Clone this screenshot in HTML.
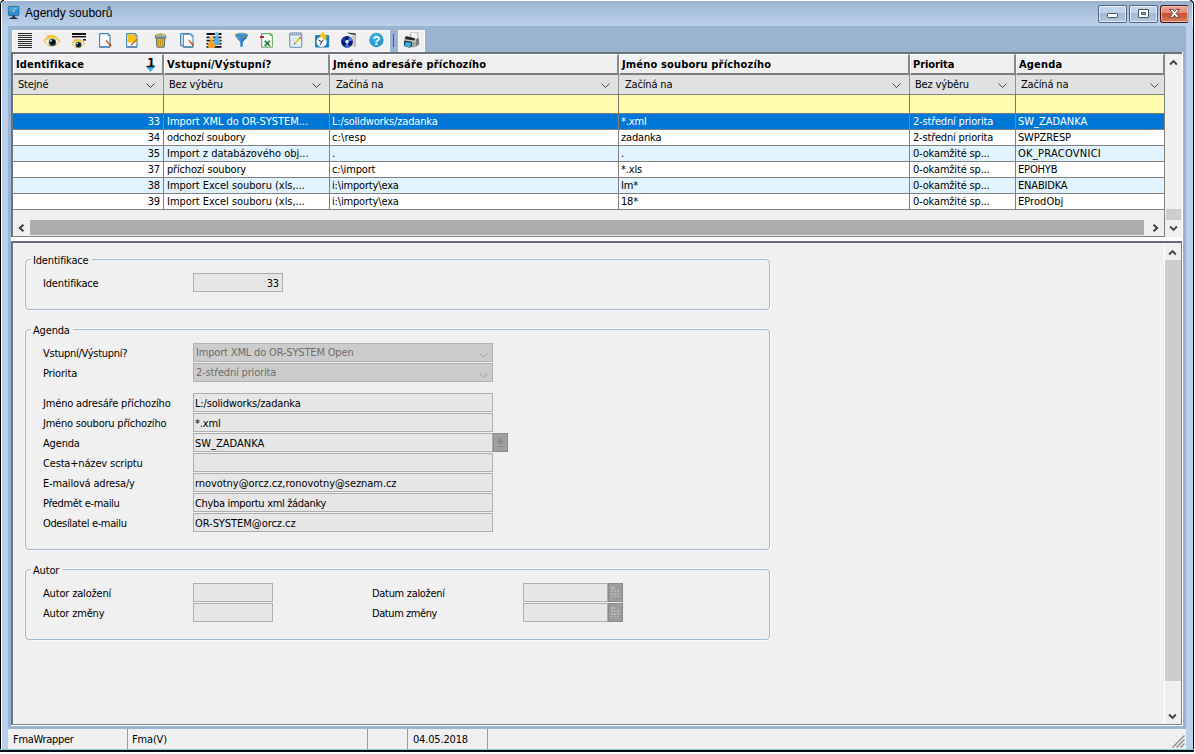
<!DOCTYPE html>
<html lang="cs">
<head>
<meta charset="utf-8">
<title>Agendy souborů</title>
<style>
*{box-sizing:border-box;margin:0;padding:0}
html,body{width:1195px;height:754px;overflow:hidden;background:#fff}
body{position:relative;font-family:"DejaVu Sans Condensed","Liberation Sans",sans-serif;font-size:11px;color:#000;letter-spacing:-0.17px;line-height:13px}
.a{position:absolute}
.t{position:absolute;white-space:nowrap;height:13px;line-height:13px}
.b{font-weight:700;letter-spacing:0.17px}
.w{color:#fff}
svg{position:absolute;overflow:visible}
</style>
</head>
<body>
<div class="a" style="left:0px;top:0px;width:1194px;height:752px;background:#b9d1ea;"></div>
<div class="a" style="left:1px;top:0px;width:1192px;height:26px;background:linear-gradient(#9cb1cc 0,#9cb1cc 2px,#99b4d2 2px,#a5bedb 9px,#b1c9e5 18px,#bad2eb 26px);"></div>
<div class="a" style="left:0px;top:0px;width:1px;height:752px;background:#000;"></div>
<div class="a" style="left:1193px;top:0px;width:1px;height:752px;background:#000;"></div>
<div class="a" style="left:1px;top:0px;width:1px;height:750px;background:#fff;"></div>
<div class="a" style="left:1192px;top:0px;width:1px;height:27px;background:#e4eef8;"></div>
<div class="a" style="left:1px;top:0px;width:1192px;height:1px;background:#fff;"></div>
<div class="a" style="left:0px;top:749px;width:1194px;height:1px;background:#86c6d6;"></div>
<div class="a" style="left:0px;top:750px;width:1194px;height:2px;background:#0b1016;"></div>
<div class="a" style="left:8px;top:26px;width:1178px;height:723px;background:#99b4d1;"></div>
<div class="t" id="ttl" style="left:25px;top:6px;font-family:'Liberation Sans',sans-serif;font-size:12px;letter-spacing:0;height:15px;line-height:15px">Agendy souborů</div>
<div class="a" style="left:1098px;top:5px;width:29px;height:18px;background:linear-gradient(#c7d8ec 0,#bdd0e7 44%,#a4bbd7 46%,#a9c0db 75%,#b4cae4 100%);border:1px solid #55677f;border-radius:2px;box-shadow:inset 0 0 0 1px rgba(240,247,255,.7)"></div>
<div class="a" style="left:1129px;top:5px;width:29px;height:18px;background:linear-gradient(#c7d8ec 0,#bdd0e7 44%,#a4bbd7 46%,#a9c0db 75%,#b4cae4 100%);border:1px solid #55677f;border-radius:2px;box-shadow:inset 0 0 0 1px rgba(240,247,255,.7)"></div>
<div class="a" style="left:1160px;top:5px;width:29px;height:18px;background:linear-gradient(#eaa594 0,#e08a74 44%,#c94f2e 46%,#cf5f3f 70%,#dc866c 100%);border:1px solid #3c1a1c;border-right-color:#b9a0a8;border-radius:3px;box-shadow:inset 0 0 0 1px rgba(255,225,215,.55)"></div>
<svg style="left:1106px;top:12px" width="13" height="7" viewBox="0 0 13 7"><rect x="1.5" y="1.5" width="10" height="4" rx=".8" fill="#fff" stroke="#46505e" stroke-width="1"/></svg>
<svg style="left:1137px;top:8px" width="13" height="11" viewBox="0 0 13 11"><path fill-rule="evenodd" d="M2 1.5 H11 Q11.5 1.5 11.5 2 V9 Q11.5 9.5 11 9.5 H2 Q1.5 9.5 1.5 9 V2 Q1.5 1.5 2 1.5z M4.5 4.5 V6.5 H8.5 V4.5z" fill="#fff" stroke="#46505e" stroke-width="1"/></svg>
<svg style="left:1168px;top:8px" width="13" height="11" viewBox="0 0 13 11"><path d="M1.6 1.4 H4.6 L6.5 3.6 L8.4 1.4 H11.4 L8.2 5.4 L11.6 9.4 H8.4 L6.5 7.2 L4.6 9.4 H1.4 L4.8 5.4z" fill="#fff" stroke="#5a3a3a" stroke-width=".9" stroke-linejoin="round"/></svg>
<svg style="left:0;top:0" width="5" height="5" viewBox="0 0 5 5"><path d="M0 0H5L0 4z" fill="#fff"/><path d="M0.5 3.5 L1.5 1.5 L3.8 0" stroke="#000" stroke-width="1.1" fill="none"/></svg>
<svg style="left:1189px;top:0" width="6" height="5" viewBox="0 0 6 5"><path d="M0 0H6V4z" fill="#fff"/><path d="M1 0 L3.4 1.4 L4.5 3.6" stroke="#000" stroke-width="1.1" fill="none"/></svg>
<div class="a" style="left:12px;top:30px;width:378px;height:22px;background:#f0f0f0;border:1px solid #f9f9f9"></div>
<div class="a" style="left:393px;top:34px;width:1px;height:13px;background:#4b5a6b;"></div>
<div class="a" style="left:398px;top:30px;width:27px;height:22px;background:#f0f0f0;border:1px solid #f9f9f9"></div>
<div class="a" style="left:11px;top:52px;width:1172px;height:185px;background:#f0f0f0;"></div>
<div class="a" style="left:11px;top:52px;width:1171px;height:2px;background:#6b737c;"></div>
<div class="a" style="left:11px;top:52px;width:2px;height:185px;background:#6b737c;"></div>
<div class="a" style="left:1182px;top:52px;width:1px;height:189px;background:#fff;"></div>
<div class="a" style="left:13px;top:54px;width:151px;height:21px;background:#f0f0f0;border-top:1px solid #fff;border-left:1px solid #fff;border-right:2px solid #8a8a8a;border-bottom:2px solid #7d7d7d"></div>
<div class="a" style="left:13px;top:75px;width:151px;height:20px;background:#e1e1e1;border-right:1px solid #909090;border-bottom:1px solid #828079"></div>
<div class="a" style="left:13px;top:95px;width:151px;height:19px;background:#fffcb0;border-right:1px solid #77756a;border-bottom:1px solid #7c7c7c"></div>
<div class="a" style="left:164px;top:54px;width:166px;height:21px;background:#f0f0f0;border-top:1px solid #fff;border-left:1px solid #fff;border-right:2px solid #8a8a8a;border-bottom:2px solid #7d7d7d"></div>
<div class="a" style="left:164px;top:75px;width:166px;height:20px;background:#e1e1e1;border-right:1px solid #909090;border-bottom:1px solid #828079"></div>
<div class="a" style="left:164px;top:95px;width:166px;height:19px;background:#fffcb0;border-right:1px solid #77756a;border-bottom:1px solid #7c7c7c"></div>
<div class="a" style="left:330px;top:54px;width:289px;height:21px;background:#f0f0f0;border-top:1px solid #fff;border-left:1px solid #fff;border-right:2px solid #8a8a8a;border-bottom:2px solid #7d7d7d"></div>
<div class="a" style="left:330px;top:75px;width:289px;height:20px;background:#e1e1e1;border-right:1px solid #909090;border-bottom:1px solid #828079"></div>
<div class="a" style="left:330px;top:95px;width:289px;height:19px;background:#fffcb0;border-right:1px solid #77756a;border-bottom:1px solid #7c7c7c"></div>
<div class="a" style="left:619px;top:54px;width:291px;height:21px;background:#f0f0f0;border-top:1px solid #fff;border-left:1px solid #fff;border-right:2px solid #8a8a8a;border-bottom:2px solid #7d7d7d"></div>
<div class="a" style="left:619px;top:75px;width:291px;height:20px;background:#e1e1e1;border-right:1px solid #909090;border-bottom:1px solid #828079"></div>
<div class="a" style="left:619px;top:95px;width:291px;height:19px;background:#fffcb0;border-right:1px solid #77756a;border-bottom:1px solid #7c7c7c"></div>
<div class="a" style="left:910px;top:54px;width:106px;height:21px;background:#f0f0f0;border-top:1px solid #fff;border-left:1px solid #fff;border-right:2px solid #8a8a8a;border-bottom:2px solid #7d7d7d"></div>
<div class="a" style="left:910px;top:75px;width:106px;height:20px;background:#e1e1e1;border-right:1px solid #909090;border-bottom:1px solid #828079"></div>
<div class="a" style="left:910px;top:95px;width:106px;height:19px;background:#fffcb0;border-right:1px solid #77756a;border-bottom:1px solid #7c7c7c"></div>
<div class="a" style="left:1016px;top:54px;width:149px;height:21px;background:#f0f0f0;border-top:1px solid #fff;border-left:1px solid #fff;border-right:2px solid #8a8a8a;border-bottom:2px solid #7d7d7d"></div>
<div class="a" style="left:1016px;top:75px;width:149px;height:20px;background:#e1e1e1;border-right:1px solid #909090;border-bottom:1px solid #828079"></div>
<div class="a" style="left:1016px;top:95px;width:149px;height:19px;background:#fffcb0;border-right:1px solid #77756a;border-bottom:1px solid #7c7c7c"></div>
<div class="t b" style="left:16px;top:58px;">Identifikace</div>
<div class="t b" style="left:167px;top:58px;">Vstupní/Výstupní?</div>
<div class="t b" style="left:333px;top:58px;">Jméno adresáře příchozího</div>
<div class="t b" style="left:622px;top:58px;">Jméno souboru příchozího</div>
<div class="t b" style="left:913px;top:58px;letter-spacing:-0.08px;">Priorita</div>
<div class="t b" style="left:1019px;top:58px;">Agenda</div>
<div class="t" style="left:18px;top:78px;">Stejné</div>
<svg style="left:146px;top:83px" width="10" height="6" viewBox="0 0 10 6"><path d="M0.5 0.5 L4.5 4.5 L8.5 0.5" fill="none" stroke="#404040" stroke-width="1"/></svg>
<div class="t" style="left:169px;top:78px;">Bez výběru</div>
<svg style="left:312px;top:83px" width="10" height="6" viewBox="0 0 10 6"><path d="M0.5 0.5 L4.5 4.5 L8.5 0.5" fill="none" stroke="#404040" stroke-width="1"/></svg>
<div class="t" style="left:336px;top:78px;">Začíná na</div>
<svg style="left:601px;top:83px" width="10" height="6" viewBox="0 0 10 6"><path d="M0.5 0.5 L4.5 4.5 L8.5 0.5" fill="none" stroke="#404040" stroke-width="1"/></svg>
<div class="t" style="left:625px;top:78px;">Začíná na</div>
<svg style="left:892px;top:83px" width="10" height="6" viewBox="0 0 10 6"><path d="M0.5 0.5 L4.5 4.5 L8.5 0.5" fill="none" stroke="#404040" stroke-width="1"/></svg>
<div class="t" style="left:915px;top:78px;">Bez výběru</div>
<svg style="left:998px;top:83px" width="10" height="6" viewBox="0 0 10 6"><path d="M0.5 0.5 L4.5 4.5 L8.5 0.5" fill="none" stroke="#404040" stroke-width="1"/></svg>
<div class="t" style="left:1021px;top:78px;">Začíná na</div>
<svg style="left:1150px;top:83px" width="10" height="6" viewBox="0 0 10 6"><path d="M0.5 0.5 L4.5 4.5 L8.5 0.5" fill="none" stroke="#404040" stroke-width="1"/></svg>
<div class="a" style="left:13px;top:114px;width:151px;height:16px;background:#0078d7;border-right:1px solid #808080;border-bottom:1px solid #808080"></div>
<div class="a" style="left:164px;top:114px;width:166px;height:16px;background:#0078d7;border-right:1px solid #808080;border-bottom:1px solid #808080"></div>
<div class="a" style="left:330px;top:114px;width:289px;height:16px;background:#0078d7;border-right:1px solid #808080;border-bottom:1px solid #808080"></div>
<div class="a" style="left:619px;top:114px;width:291px;height:16px;background:#0078d7;border-right:1px solid #808080;border-bottom:1px solid #808080"></div>
<div class="a" style="left:910px;top:114px;width:106px;height:16px;background:#0078d7;border-right:1px solid #808080;border-bottom:1px solid #808080"></div>
<div class="a" style="left:1016px;top:114px;width:149px;height:16px;background:#0078d7;border-right:1px solid #808080;border-bottom:1px solid #808080"></div>
<div class="t w" style="right:1035px;top:115px;">33</div>
<div class="t w" style="left:167px;top:115px;letter-spacing:-0.04px;">Import XML do OR-SYSTEM...</div>
<div class="t w" style="left:332px;top:115px;">L:/solidworks/zadanka</div>
<div class="t w" style="left:621px;top:115px;">*.xml</div>
<div class="t w" style="left:913px;top:115px;">2-střední priorita</div>
<div class="t w" style="left:1018px;top:115px;letter-spacing:0px;">SW_ZADANKA</div>
<div class="a" style="left:13px;top:130px;width:151px;height:16px;background:#fff;border-right:1px solid #808080;border-bottom:1px solid #808080"></div>
<div class="a" style="left:164px;top:130px;width:166px;height:16px;background:#fff;border-right:1px solid #808080;border-bottom:1px solid #808080"></div>
<div class="a" style="left:330px;top:130px;width:289px;height:16px;background:#fff;border-right:1px solid #808080;border-bottom:1px solid #808080"></div>
<div class="a" style="left:619px;top:130px;width:291px;height:16px;background:#fff;border-right:1px solid #808080;border-bottom:1px solid #808080"></div>
<div class="a" style="left:910px;top:130px;width:106px;height:16px;background:#fff;border-right:1px solid #808080;border-bottom:1px solid #808080"></div>
<div class="a" style="left:1016px;top:130px;width:149px;height:16px;background:#fff;border-right:1px solid #808080;border-bottom:1px solid #808080"></div>
<div class="t" style="right:1035px;top:131px;">34</div>
<div class="t" style="left:167px;top:131px;">odchozí soubory</div>
<div class="t" style="left:332px;top:131px;letter-spacing:0.1px;">c:\resp</div>
<div class="t" style="left:621px;top:131px;">zadanka</div>
<div class="t" style="left:913px;top:131px;">2-střední priorita</div>
<div class="t" style="left:1018px;top:131px;">SWPZRESP</div>
<div class="a" style="left:13px;top:146px;width:151px;height:16px;background:#e1f3fd;border-right:1px solid #808080;border-bottom:1px solid #808080"></div>
<div class="a" style="left:164px;top:146px;width:166px;height:16px;background:#e1f3fd;border-right:1px solid #808080;border-bottom:1px solid #808080"></div>
<div class="a" style="left:330px;top:146px;width:289px;height:16px;background:#e1f3fd;border-right:1px solid #808080;border-bottom:1px solid #808080"></div>
<div class="a" style="left:619px;top:146px;width:291px;height:16px;background:#e1f3fd;border-right:1px solid #808080;border-bottom:1px solid #808080"></div>
<div class="a" style="left:910px;top:146px;width:106px;height:16px;background:#e1f3fd;border-right:1px solid #808080;border-bottom:1px solid #808080"></div>
<div class="a" style="left:1016px;top:146px;width:149px;height:16px;background:#e1f3fd;border-right:1px solid #808080;border-bottom:1px solid #808080"></div>
<div class="t" style="right:1035px;top:147px;">35</div>
<div class="t" style="left:167px;top:147px;letter-spacing:-0.02px;">Import z databázového obj...</div>
<div class="t" style="left:332px;top:147px;">.</div>
<div class="t" style="left:621px;top:147px;">.</div>
<div class="t" style="left:913px;top:147px;">0-okamžité sp...</div>
<div class="t" style="left:1018px;top:147px;letter-spacing:0.26px;">OK_PRACOVNICI</div>
<div class="a" style="left:13px;top:162px;width:151px;height:16px;background:#fff;border-right:1px solid #808080;border-bottom:1px solid #808080"></div>
<div class="a" style="left:164px;top:162px;width:166px;height:16px;background:#fff;border-right:1px solid #808080;border-bottom:1px solid #808080"></div>
<div class="a" style="left:330px;top:162px;width:289px;height:16px;background:#fff;border-right:1px solid #808080;border-bottom:1px solid #808080"></div>
<div class="a" style="left:619px;top:162px;width:291px;height:16px;background:#fff;border-right:1px solid #808080;border-bottom:1px solid #808080"></div>
<div class="a" style="left:910px;top:162px;width:106px;height:16px;background:#fff;border-right:1px solid #808080;border-bottom:1px solid #808080"></div>
<div class="a" style="left:1016px;top:162px;width:149px;height:16px;background:#fff;border-right:1px solid #808080;border-bottom:1px solid #808080"></div>
<div class="t" style="right:1035px;top:163px;">37</div>
<div class="t" style="left:167px;top:163px;">příchozí soubory</div>
<div class="t" style="left:332px;top:163px;">c:\import</div>
<div class="t" style="left:621px;top:163px;">*.xls</div>
<div class="t" style="left:913px;top:163px;">0-okamžité sp...</div>
<div class="t" style="left:1018px;top:163px;">EPOHYB</div>
<div class="a" style="left:13px;top:178px;width:151px;height:16px;background:#e1f3fd;border-right:1px solid #808080;border-bottom:1px solid #808080"></div>
<div class="a" style="left:164px;top:178px;width:166px;height:16px;background:#e1f3fd;border-right:1px solid #808080;border-bottom:1px solid #808080"></div>
<div class="a" style="left:330px;top:178px;width:289px;height:16px;background:#e1f3fd;border-right:1px solid #808080;border-bottom:1px solid #808080"></div>
<div class="a" style="left:619px;top:178px;width:291px;height:16px;background:#e1f3fd;border-right:1px solid #808080;border-bottom:1px solid #808080"></div>
<div class="a" style="left:910px;top:178px;width:106px;height:16px;background:#e1f3fd;border-right:1px solid #808080;border-bottom:1px solid #808080"></div>
<div class="a" style="left:1016px;top:178px;width:149px;height:16px;background:#e1f3fd;border-right:1px solid #808080;border-bottom:1px solid #808080"></div>
<div class="t" style="right:1035px;top:179px;">38</div>
<div class="t" style="left:167px;top:179px;letter-spacing:-0.03px;">Import Excel souboru (xls,...</div>
<div class="t" style="left:332px;top:179px;">i:\importy\exa</div>
<div class="t" style="left:621px;top:179px;">Im*</div>
<div class="t" style="left:913px;top:179px;">0-okamžité sp...</div>
<div class="t" style="left:1018px;top:179px;">ENABIDKA</div>
<div class="a" style="left:13px;top:194px;width:151px;height:16px;background:#fff;border-right:1px solid #808080;border-bottom:1px solid #808080"></div>
<div class="a" style="left:164px;top:194px;width:166px;height:16px;background:#fff;border-right:1px solid #808080;border-bottom:1px solid #808080"></div>
<div class="a" style="left:330px;top:194px;width:289px;height:16px;background:#fff;border-right:1px solid #808080;border-bottom:1px solid #808080"></div>
<div class="a" style="left:619px;top:194px;width:291px;height:16px;background:#fff;border-right:1px solid #808080;border-bottom:1px solid #808080"></div>
<div class="a" style="left:910px;top:194px;width:106px;height:16px;background:#fff;border-right:1px solid #808080;border-bottom:1px solid #808080"></div>
<div class="a" style="left:1016px;top:194px;width:149px;height:16px;background:#fff;border-right:1px solid #808080;border-bottom:1px solid #808080"></div>
<div class="t" style="right:1035px;top:195px;">39</div>
<div class="t" style="left:167px;top:195px;letter-spacing:-0.03px;">Import Excel souboru (xls,...</div>
<div class="t" style="left:332px;top:195px;">i:\importy\exa</div>
<div class="t" style="left:621px;top:195px;">18*</div>
<div class="t" style="left:913px;top:195px;">0-okamžité sp...</div>
<div class="t" style="left:1018px;top:195px;letter-spacing:0.04px;">EProdObj</div>
<div class="t b" style="left:147px;top:56px;font-size:13px;letter-spacing:0">1</div>
<svg style="left:145px;top:65px" width="11" height="8" viewBox="0 0 11 8"><path d="M1 1.2 H10 L5.5 7z" fill="#3fa7dc"/><path d="M1 1 H10 L9 2.2 H2z" fill="#10283c"/></svg>
<div class="a" style="left:12px;top:51px;width:378px;height:1px;background:#fbfbfb;"></div>
<div class="a" style="left:398px;top:51px;width:27px;height:1px;background:#fbfbfb;"></div>
<div class="a" style="left:13px;top:220px;width:1151px;height:16px;background:#f0f0f0;"></div>
<div class="a" style="left:30px;top:220px;width:1114px;height:15px;background:#acacac;"></div>
<svg style="left:18px;top:224px" width="7" height="8" viewBox="0 0 7 8"><path d="M5.5 0.7 L1.8 4 L5.5 7.3" fill="none" stroke="#404040" stroke-width="2"/></svg>
<svg style="left:1152px;top:224px" width="7" height="8" viewBox="0 0 7 8"><path d="M1.5 0.7 L5.2 4 L1.5 7.3" fill="none" stroke="#404040" stroke-width="2"/></svg>
<div class="a" style="left:13px;top:236px;width:1152px;height:1px;background:#808080;"></div>
<div class="a" style="left:1164px;top:54px;width:1px;height:183px;background:#808080;"></div>
<div class="a" style="left:1165px;top:54px;width:17px;height:183px;background:#f0f0f0;"></div>
<div class="a" style="left:1166px;top:209px;width:15px;height:11px;background:#cdcdcd;"></div>
<svg style="left:1169px;top:59px" width="9" height="7" viewBox="0 0 9 7"><path d="M1.1 5.5 L4.5 2 L7.9 5.5" fill="none" stroke="#404040" stroke-width="1.8"/></svg>
<svg style="left:1169px;top:225px" width="9" height="7" viewBox="0 0 9 7"><path d="M1.1 1.5 L4.5 5 L7.9 1.5" fill="none" stroke="#404040" stroke-width="1.8"/></svg>
<div class="a" style="left:11px;top:237px;width:1172px;height:4px;background:#fafcff;"></div>
<div class="a" style="left:11px;top:241px;width:1172px;height:485px;background:#f0f0f0;"></div>
<div class="a" style="left:11px;top:241px;width:1172px;height:2px;background:#666d75;"></div>
<div class="a" style="left:11px;top:241px;width:2px;height:485px;background:#6b737c;"></div>
<div class="a" style="left:1181px;top:243px;width:1px;height:482px;background:#828282;"></div>
<div class="a" style="left:1182px;top:241px;width:1px;height:485px;background:#fff;"></div>
<div class="a" style="left:13px;top:724px;width:1169px;height:1px;background:#828282;"></div>
<div class="a" style="left:11px;top:725px;width:1172px;height:1px;background:#fff;"></div>
<div class="a" style="left:1164px;top:243px;width:1px;height:481px;background:#fff;"></div>
<div class="a" style="left:1165px;top:260px;width:16px;height:421px;background:#cdcdcd;"></div>
<svg style="left:1168px;top:249px" width="9" height="7" viewBox="0 0 9 7"><path d="M1.1 5.5 L4.5 2 L7.9 5.5" fill="none" stroke="#404040" stroke-width="1.8"/></svg>
<svg style="left:1168px;top:713px" width="9" height="7" viewBox="0 0 9 7"><path d="M1.1 1.5 L4.5 5 L7.9 1.5" fill="none" stroke="#404040" stroke-width="1.8"/></svg>
<div class="a" style="left:25px;top:259px;width:745px;height:51px;background:transparent;border:1px solid #a3b8cf;border-radius:4px;box-shadow:0 0 0 1px rgba(255,255,255,.55)"></div>
<div class="a" style="left:31px;top:257px;width:61px;height:5px;background:#f0f0f0;"></div>
<div class="t" style="left:33px;top:254px;">Identifikace</div>
<div class="a" style="left:25px;top:329px;width:745px;height:221px;background:transparent;border:1px solid #a3b8cf;border-radius:4px;box-shadow:0 0 0 1px rgba(255,255,255,.55)"></div>
<div class="a" style="left:31px;top:327px;width:42px;height:5px;background:#f0f0f0;"></div>
<div class="t" style="left:33px;top:324px;">Agenda</div>
<div class="a" style="left:25px;top:569px;width:745px;height:71px;background:transparent;border:1px solid #a3b8cf;border-radius:4px;box-shadow:0 0 0 1px rgba(255,255,255,.55)"></div>
<div class="a" style="left:31px;top:567px;width:32px;height:5px;background:#f0f0f0;"></div>
<div class="t" style="left:33px;top:564px;">Autor</div>
<div class="t" style="left:43px;top:277px;">Identifikace</div>
<div class="a" style="left:193px;top:273px;width:90px;height:19px;background:#e6e6e6;border:1px solid #adadad"></div>
<div class="t" style="right:916px;top:277px;color:#000;">33</div>
<div class="t" style="left:43px;top:347px;letter-spacing:-0.27px;">Vstupní/Výstupní?</div>
<div class="a" style="left:193px;top:343px;width:300px;height:19px;background:#cccccc;border:1px solid #b2b2b2"></div>
<div class="t" style="left:196px;top:346px;color:#6d6d6d;">Import XML do OR-SYSTEM Open</div>
<svg style="left:479px;top:353px" width="9" height="5" viewBox="0 0 9 5"><path d="M0.5 0.5 L4.5 4.2 L8.5 0.5" fill="none" stroke="#9a9a9a" stroke-width="1"/></svg>
<div class="t" style="left:43px;top:367px;">Priorita</div>
<div class="a" style="left:193px;top:363px;width:300px;height:19px;background:#cccccc;border:1px solid #b2b2b2"></div>
<div class="t" style="left:196px;top:366px;color:#6d6d6d;">2-střední priorita</div>
<svg style="left:479px;top:373px" width="9" height="5" viewBox="0 0 9 5"><path d="M0.5 0.5 L4.5 4.2 L8.5 0.5" fill="none" stroke="#9a9a9a" stroke-width="1"/></svg>
<div class="t" style="left:43px;top:397px;">Jméno adresáře příchozího</div>
<div class="a" style="left:193px;top:393px;width:300px;height:19px;background:#e6e6e6;border:1px solid #adadad"></div>
<div class="t" style="left:195px;top:397px;color:#000;">L:/solidworks/zadanka</div>
<div class="t" style="left:43px;top:417px;letter-spacing:-0.22px;">Jméno souboru příchozího</div>
<div class="a" style="left:193px;top:413px;width:300px;height:19px;background:#e6e6e6;border:1px solid #adadad"></div>
<div class="t" style="left:195px;top:417px;color:#000;">*.xml</div>
<div class="t" style="left:43px;top:437px;">Agenda</div>
<div class="a" style="left:193px;top:433px;width:300px;height:19px;background:#e6e6e6;border:1px solid #adadad"></div>
<div class="t" style="left:195px;top:437px;color:#000;letter-spacing:0px;">SW_ZADANKA</div>
<div class="t" style="left:43px;top:457px;">Cesta+název scriptu</div>
<div class="a" style="left:193px;top:453px;width:300px;height:19px;background:#e6e6e6;border:1px solid #adadad"></div>
<div class="t" style="left:43px;top:477px;">E-mailová adresa/y</div>
<div class="a" style="left:193px;top:473px;width:300px;height:19px;background:#e6e6e6;border:1px solid #adadad"></div>
<div class="t" style="left:195px;top:477px;color:#000;letter-spacing:-0.06px;">rnovotny@orcz.cz,ronovotny@seznam.cz</div>
<div class="t" style="left:43px;top:497px;letter-spacing:-0.37px;">Předmět e-mailu</div>
<div class="a" style="left:193px;top:493px;width:300px;height:19px;background:#e6e6e6;border:1px solid #adadad"></div>
<div class="t" style="left:195px;top:497px;color:#000;letter-spacing:-0.32px;">Chyba importu xml žádanky</div>
<div class="t" style="left:43px;top:517px;letter-spacing:-0.35px;">Odesílatel e-mailu</div>
<div class="a" style="left:193px;top:513px;width:300px;height:19px;background:#e6e6e6;border:1px solid #adadad"></div>
<div class="t" style="left:195px;top:517px;color:#000;letter-spacing:-0.05px;">OR-SYSTEM@orcz.cz</div>
<div class="a" style="left:493px;top:433px;width:15px;height:19px;background:#a0a0a0;border:1px solid #8c8c8c"></div>
<svg style="left:496px;top:438px" width="9" height="10" viewBox="0 0 9 10"><path d="M3 0h3v3h2.5L4.5 7 0.5 3H3z M1 8h7v1H1z" fill="#8a8a8a"/></svg>
<div class="t" style="left:43px;top:587px;">Autor založení</div>
<div class="a" style="left:193px;top:583px;width:80px;height:19px;background:#e6e6e6;border:1px solid #adadad"></div>
<div class="t" style="left:43px;top:607px;">Autor změny</div>
<div class="a" style="left:193px;top:603px;width:80px;height:19px;background:#e6e6e6;border:1px solid #adadad"></div>
<div class="t" style="left:372px;top:587px;letter-spacing:-0.31px;">Datum založení</div>
<div class="a" style="left:523px;top:583px;width:85px;height:19px;background:#e6e6e6;border:1px solid #adadad"></div>
<div class="t" style="left:372px;top:607px;letter-spacing:-0.42px;">Datum změny</div>
<div class="a" style="left:523px;top:603px;width:85px;height:19px;background:#e6e6e6;border:1px solid #adadad"></div>
<div class="a" style="left:608px;top:583px;width:15px;height:19px;background:#9c9c9c;border:1px solid #8a8a8a"></div>
<svg style="left:610px;top:586px" width="11" height="12" viewBox="0 0 11 12"><path d="M1 1h4v2H1z M1 4h2v2H1z M4 4h2v2H4z M7 4h2v2H7z M1 7h2v2H1z M4 7h2v2H4z M7 7h2v2H7z M1 10h2v1H1z M4 10h2v1H4z M7 10h2v1H7z" fill="#b6b6b6"/></svg>
<div class="a" style="left:608px;top:603px;width:15px;height:19px;background:#9c9c9c;border:1px solid #8a8a8a"></div>
<svg style="left:610px;top:606px" width="11" height="12" viewBox="0 0 11 12"><path d="M1 1h4v2H1z M1 4h2v2H1z M4 4h2v2H4z M7 4h2v2H7z M1 7h2v2H1z M4 7h2v2H4z M7 7h2v2H7z M1 10h2v1H1z M4 10h2v1H4z M7 10h2v1H7z" fill="#b6b6b6"/></svg>
<div class="a" style="left:8px;top:729px;width:1178px;height:20px;background:#f0f0f0;"></div>
<div class="a" style="left:127px;top:729px;width:1px;height:20px;background:#9d9d9d;"></div>
<div class="a" style="left:367px;top:729px;width:1px;height:20px;background:#9d9d9d;"></div>
<div class="a" style="left:407px;top:729px;width:1px;height:20px;background:#9d9d9d;"></div>
<div class="a" style="left:487px;top:729px;width:1px;height:20px;background:#9d9d9d;"></div>
<div class="t" style="left:13px;top:733px;letter-spacing:-0.3px;">FmaWrapper</div>
<div class="t" style="left:132px;top:733px;">Fma(V)</div>
<div class="t" style="left:413px;top:733px;">04.05.2018</div>
<svg style="left:1172px;top:735px" width="13" height="13" viewBox="0 0 13 13"><path d="M0.5 12.5L12.5 0.5M4.5 12.5L12.5 4.5M8.5 12.5L12.5 8.5" stroke="#8c8c8c" stroke-width="1.4" fill="none"/></svg>
<svg style="left:0;top:0" width="1195" height="60" viewBox="0 0 1195 60">
<defs>
<linearGradient id="gEye" x1="0" y1="0" x2="0" y2="1"><stop offset="0" stop-color="#f7c81e"/><stop offset="1" stop-color="#e9b62c"/></linearGradient>
<linearGradient id="gFun" x1="0" y1="0" x2="1" y2="0"><stop offset="0" stop-color="#56a8e0"/><stop offset=".55" stop-color="#2b84cc"/><stop offset="1" stop-color="#1d68b0"/></linearGradient>
<linearGradient id="gBox" x1="0" y1="0" x2="1" y2="0"><stop offset="0" stop-color="#f4f4f4"/><stop offset="1" stop-color="#b4b4b4"/></linearGradient>
<radialGradient id="gHelp" cx=".4" cy=".3" r=".8"><stop offset="0" stop-color="#3cb4e6"/><stop offset="1" stop-color="#1f8fc8"/></radialGradient>
<g id="eye">
  <path d="M0.3 6.2 C2.5 2.2 5.5 0.9 8.3 1.1 C11.6 1.3 14.3 3.5 15.7 7 C13.4 10.4 10.5 11.7 7.7 11.7 C4.6 11.7 2 9.8 0.3 6.2z" fill="#fcf4d2" stroke="#dcae30" stroke-width="0.9"/>
  <path d="M0.6 5.9 C2.6 2.2 5.5 1.1 8.3 1.3 C11 1.5 13.4 3 14.8 5.4 C12.4 3.6 10.2 3 8.1 3.1 C5.3 3.2 2.8 4.2 0.6 5.9z" fill="url(#gEye)"/>
  <path d="M1.6 6.4 C4 4.4 6 4 8.2 4 C10.6 4 12.8 4.8 14.6 6.6" fill="none" stroke="#e2b93c" stroke-width="0.7"/>
  <path d="M3.8 0 L4.6 2.2" stroke="#e4b42c" stroke-width="0.9"/>
  <circle cx="8.4" cy="8" r="3.7" fill="#1f5873"/>
  <circle cx="8.7" cy="7.9" r="2.5" fill="#060b10"/>
  <circle cx="7.1" cy="6.5" r="0.95" fill="#dff2ff"/>
</g>
<g id="doc">
  <path d="M0.6 1 Q0.6 0.6 1 0.6 H9 L11 2.6 V13.6 Q11 14 10.6 14 H1 Q0.6 14 0.6 13.6z" fill="#fbfdff" stroke="#4585b6" stroke-width="1.15"/><path d="M0.6 14 H11" stroke="#3a74a4" stroke-width="1.2"/>
  <path d="M8.6 0.8 L10.8 3 H8.6z" fill="#4f9ad0"/>
</g>
</defs>

<!-- window icon -->
<g transform="translate(8,6)">
  <rect x="0.3" y="0.4" width="10.6" height="9.2" rx="0.8" fill="#2b8fd3" stroke="#2a5f96" stroke-width="0.8"/>
  <path d="M1 1 H10.4 V4 Q6 3.4 1 6z" fill="#4fb0e8" opacity=".7"/>
  <path d="M4.2 5.4 L6 3.4 L7 4.4 L5.6 6.2z" fill="#e8c860"/>
  <path d="M6.4 2.6 L7.6 2 L7.2 3.2z" fill="#e6f6ff"/>
  <rect x="4.6" y="9.6" width="2.2" height="2" fill="#1c2434"/>
  <path d="M0.8 12.4 Q5.6 10.2 10.2 12.4 Q5.6 13.6 0.8 12.4z" fill="#1c2434"/>
</g>

<!-- 1 list lines -->
<g fill="#262626"><rect x="18" y="33" width="14" height="1"/><rect x="18" y="35" width="14" height="1"/><rect x="18" y="37" width="14" height="1"/><rect x="18" y="39" width="14" height="1"/><rect x="18" y="41" width="14" height="1"/><rect x="18" y="43" width="14" height="1"/><rect x="18" y="45" width="14" height="1"/><rect x="18" y="47" width="14" height="1"/></g>

<!-- 2 eye -->
<use href="#eye" transform="translate(44,34.4)"/>

<!-- 3 lines + eye -->
<rect x="72" y="33" width="14" height="2" fill="#111"/><rect x="72" y="36" width="14" height="1.4" fill="#111"/><rect x="83" y="39" width="3" height="1.6" fill="#222"/>
<use href="#eye" transform="translate(71.6,38.4) scale(0.82,0.8)"/>

<!-- 4 new doc + pencil -->
<g transform="translate(99,33)"><use href="#doc"/>
  <path d="M6.2 7.6 L7.4 6.8 L12.2 12 L11 13.2z" fill="#c8642a"/><path d="M5.4 6.4 L7.4 6.8 L6.2 7.8z" fill="#e2c49a"/><path d="M10.4 11.6 L11.6 10.6 L12.6 12.4 L11.4 13.4z" fill="#a84a18"/></g>

<!-- 5 edit doc (yellow) -->
<g transform="translate(126,33)"><use href="#doc"/>
  <path d="M1.5 1.5 H8.4 L10.1 3.2 V8.2 Q6 10.2 1.5 9.2z" fill="#f8c214"/>
  <path d="M10.6 5.8 L11.6 7 L6.6 11.8 L5.4 10.8z" fill="#d8741c"/><path d="M5.4 10.8 L6.6 11.8 L4.6 12.6z" fill="#5a4a3a"/></g>

<!-- 6 trash -->
<g transform="translate(155,33)">
  <path d="M1.4 5.2 H9.8 L9.4 13.6 Q9.4 14.2 8.8 14.2 H2.4 Q1.8 14.2 1.8 13.6z" fill="#e6b62e" stroke="#56697a" stroke-width="1"/>
  <path d="M3.6 6.4 V13 M5.6 6.4 V13 M7.6 6.4 V13" stroke="#c4961a" stroke-width="1"/>
  <path d="M0.4 3 Q0.4 1.8 1.6 1.8 H9.6 Q10.8 1.8 10.8 3 V5 H0.4z" fill="#7c9cbc" stroke="#587088" stroke-width=".8"/>
  <path d="M1.2 2.6 Q5.6 1.4 10 2.6" stroke="#f4d048" stroke-width="1" fill="none"/>
  <path d="M4.2 1.6 Q5.6 -0.4 7 1.6" stroke="#c8a42c" stroke-width="1.1" fill="none"/>
</g>

<!-- 7 copy docs + pencil -->
<g transform="translate(180,33)">
  <rect x="0.7" y="0.7" width="8.6" height="12" rx="0.8" fill="#e8f6ff" stroke="#3f82b4" stroke-width="1.3"/>
  <g transform="translate(2.8,0.6) scale(0.93,0.96)"><use href="#doc"/></g>
  <path d="M8.2 7.8 L9.4 7 L13.6 11.6 L12.4 12.8z" fill="#c8642a"/><path d="M7.4 6.6 L9.4 7 L8.2 8z" fill="#e2c49a"/><path d="M11.8 11.2 L13 10.2 L14 12 L12.8 13z" fill="#a84a18"/>
</g>

<!-- 8 lines + persons -->
<g fill="#0c0c0c"><rect x="206.5" y="33" width="15" height="2"/><rect x="206.5" y="36.6" width="15" height="1.6"/><rect x="206.5" y="39.8" width="15" height="1.6"/><rect x="206.5" y="43" width="15" height="1.6"/><rect x="206.5" y="46" width="15" height="1.8"/></g>
<circle cx="216.8" cy="33.7" r="2" fill="#86c8ee"/>
<path d="M215.7 35.2 C215.4 38 213.1 40 213.1 42.6 Q213.1 44.8 216.8 44.8 Q220.5 44.8 220.5 42.6 C220.5 40 218.2 38 217.9 35.2z" fill="#58aee0"/>
<circle cx="211.4" cy="37.8" r="2.1" fill="#fcc47c"/>
<path d="M210.3 39.3 C210 42 207.5 43.6 207.5 46 Q207.5 48.2 211.4 48.2 Q215.3 48.2 215.3 46 C215.3 43.6 212.8 42 212.5 39.3z" fill="#f6a030"/>

<!-- 9 funnel -->
<path d="M235 35 C236 39.2 240.2 40.4 240.3 43.2 V46.4 Q241.6 47.6 242.9 46.2 V43.2 C243 40.4 247 39.2 248 35z" fill="url(#gFun)"/>
<ellipse cx="241.5" cy="35.2" rx="6.3" ry="2" fill="#2f7cc0" stroke="#8fa884" stroke-width=".9"/>
<ellipse cx="241.5" cy="34.6" rx="5" ry="1" fill="#4a9ad8"/>

<!-- 10 excel -->
<g transform="translate(261,33)">
  <path d="M0.6 1 Q0.6 0.6 1 0.6 H9.4 L11.4 2.6 V13.8 Q11.4 14.2 11 14.2 H1 Q0.6 14.2 0.6 13.8z" fill="#fcfffc" stroke="#72ac72" stroke-width="1.2"/>
  <path d="M9 0.8 L11.2 3 H9z" fill="#4fa84f"/>
  <rect x="-1" y="3" width="4" height="1.9" rx=".5" fill="#b42024"/>
  <path d="M3.8 7.8 L8.8 13 M8.8 7.8 L3.8 13" stroke="#2c7c3c" stroke-width="1.8"/>
</g>

<!-- 11 notepad + pencil -->
<g transform="translate(289,32)">
  <rect x="0.7" y="0.9" width="12" height="14.4" rx="1.6" fill="#eaf4fc" stroke="#7c9cc4" stroke-width="1.3"/>
  <rect x="1.2" y="1.2" width="11" height="2.2" fill="#7f93b2"/><path d="M2.6 0.6 V2.6 M4.6 0.6 V2.6 M6.6 0.6 V2.6 M8.6 0.6 V2.6 M10.6 0.6 V2.6" stroke="#dfe8f2" stroke-width=".7"/>
  <path d="M2.4 6.4 H8 M2.4 8.6 H6 M2.4 12.8 H10.4" stroke="#c4dcf0" stroke-width="1"/>
  <path d="M10 5.6 L11.4 7 L6.6 11.8 L5.2 10.4z" fill="#f2c62a"/><path d="M5.2 10.4 L6.6 11.8 L4.6 12.6z" fill="#6a5a4a"/><path d="M10 5.6 L11 4.6 L12.4 6 L11.4 7z" fill="#a8582a"/>
</g>

<!-- 12 clock + arrow -->
<rect x="315" y="35" width="14.2" height="12.6" rx="1" fill="#2282ba"/>
<circle cx="321.6" cy="41.8" r="5.1" fill="#fafdff"/>
<path d="M318.6 40 L321.6 42 L320 45 M321.6 42 L323.6 39.4" stroke="#20303c" stroke-width="1" fill="none"/>
<path d="M322.4 31.6 L327.6 37.6 L325 37.4 L326 40 L323 39.6 L322.6 37.4 L319.4 37.6z" fill="#f8c41c"/>

<!-- 13 cd + box -->
<path d="M349.6 33 L355.4 33.6 L356 34.4 V46.6 L351 47.2 V34z" fill="url(#gBox)"/>
<path d="M346.6 32.6 L355.6 33.6 L355.8 34.8 L351 34.2z" fill="#1c1c1c"/>
<circle cx="347" cy="41.8" r="5.9" fill="#0c1c74"/>
<path d="M347 41.8 L352.8 40.6 A5.9 5.9 0 0 0 350 36.8z" fill="#4c84d4"/>
<path d="M347 41.8 L344.6 47.2 A5.9 5.9 0 0 0 349.8 47z" fill="#3c74c8"/>
<path d="M347 41.8 L341.2 41 A5.9 5.9 0 0 1 343.6 37z" fill="#1c3c9c"/>
<circle cx="347" cy="41.8" r="1.7" fill="#f4f4f8"/>

<!-- 14 help -->
<circle cx="376.4" cy="40" r="7.2" fill="url(#gHelp)"/>
<text x="376.4" y="44.6" text-anchor="middle" font-family="Liberation Sans, sans-serif" font-weight="700" font-size="13" fill="#fff">?</text>

<!-- 15 printer -->
<g transform="translate(403,32)">
  <path d="M7 1.2 L7.8 0.3 H14.3 L15.3 1.4 L15.2 6.6 L7.4 6.6z" fill="#aeaeae"/>
  <path d="M8.2 0.7 H13.9 L14.5 6.2 L8.4 6.4z" fill="#fdfdfd"/>
  <path d="M1 7 L3 4.6 L12 6.6 L15.8 6 L16.2 12.2 L12.6 15 L9 15.4 L1 13.2z" fill="#cdcdcd"/>
  <path d="M12.8 7 L15.9 6.1 L16.2 12.2 L13 14.8z" fill="#7e7e7e"/>
  <path d="M9 10 L12.8 9.4 L13 14.8 L9 15.4z" fill="#a6a6a6"/>
  <path d="M1.8 6 Q2.2 4 4 4.3 L11.6 6.2 Q12.6 7.4 11.2 8.6 L2.4 7.2z" fill="#262626"/>
  <path d="M1.2 8.4 L9 9.8 L9 14.2 L6.6 15.8 L0.9 13.9z" fill="#17303e"/>
  <path d="M2.9 9.9 L8.5 10.9 L7 15.5 L1.2 13.8z" fill="#37b7df"/>
</g>
</svg>

</body>
</html>
